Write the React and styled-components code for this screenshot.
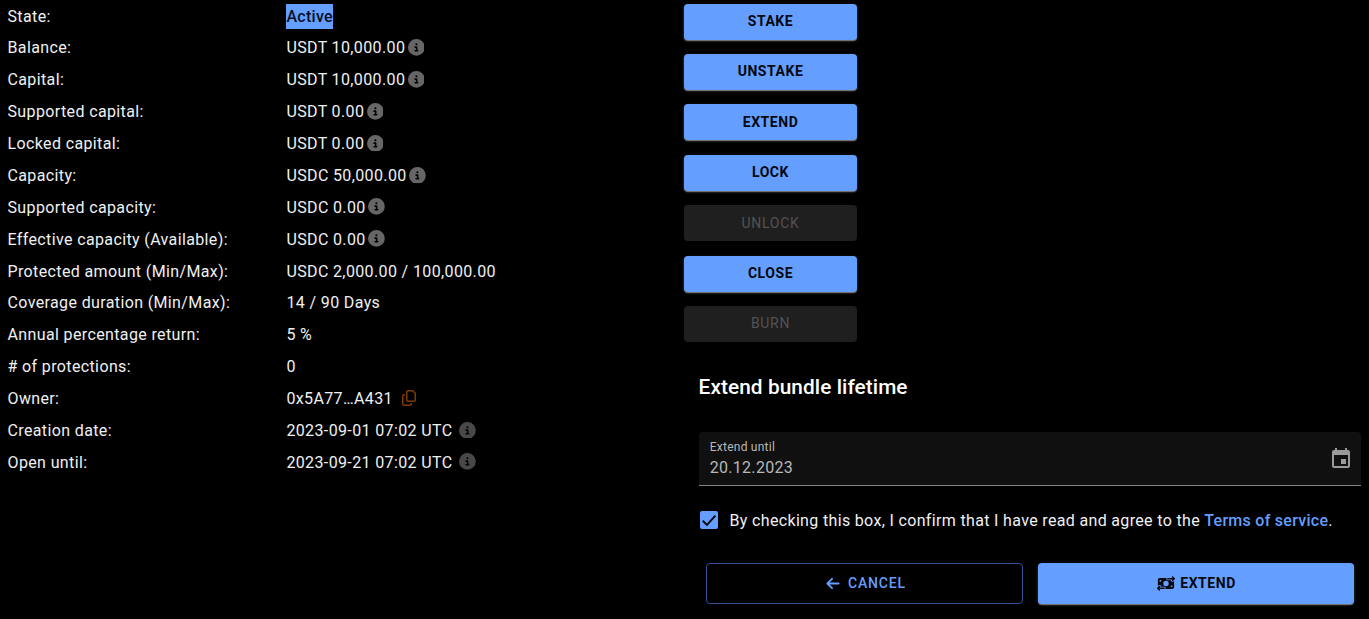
import React from "react";
import styled, { createGlobalStyle } from "styled-components";
import { FaCircleInfo, FaRegCopy, FaArrowLeft, FaMoneyBillTransfer } from "react-icons/fa6";
import { MdEvent } from "react-icons/md";

const GlobalStyle = createGlobalStyle`
  *, *::before, *::after { box-sizing: border-box; }
  body {
    margin: 0;
    background: #000;
    color: #fff;
    font-family: Roboto, "Liberation Sans", sans-serif;
    font-size: 16px;
    line-height: 24px;
    letter-spacing: 0.37px;
    overflow: hidden;
  }
`;

const Page = styled.main`
  display: grid;
  grid-template-columns: 684px 677px;
  height: 619px;
  align-items: start;
`;

const Details = styled.dl`
  display: grid;
  grid-template-columns: 278.9px 1fr;
  grid-auto-rows: 31.88px;
  margin: 0;
  padding: 4.6px 0 0 7.5px;
`;

const Label = styled.dt`
  color: #f0f0f0;
`;

const Value = styled.dd`
  display: flex;
  align-items: flex-start;
  margin: 0;
  color: #f0f0f0;
`;

const Status = styled.span`
  height: 25px;
  margin-top: -0.6px;
  padding-top: 0.6px;
  background: #649eff;
  color: #0a0f1c;
  font-weight: 500;
  letter-spacing: 0.3px;
`;

const InfoIcon = styled(FaCircleInfo)`
  width: 16.8px;
  height: 16.8px;
  margin: 2.6px 0 0 ${(p) => (p.$spaced ? "6.4px" : "2.3px")};
  color: ${(p) => (p.$spaced ? "#484848" : "#666")};
`;

const CopyIcon = styled(FaRegCopy)`
  width: 16px;
  height: 16px;
  margin: 3.2px 0 0 8.1px;
  color: #7a3c00;
`;

const Side = styled.section`
  padding-top: 3.6px;
`;

const Actions = styled.div`
  display: flex;
  flex-direction: column;
  gap: 14.4px;
  width: 173px;
`;

const Button = styled.button`
  display: flex;
  align-items: center;
  justify-content: center;
  height: 36px;
  padding: 0 16px 1px;
  border: 0;
  border-radius: 4px;
  background: #649eff;
  color: #05080f;
  font: 700 14px/24px Roboto, sans-serif;
  letter-spacing: 0.55px;
  text-transform: uppercase;
  box-shadow: 0 1px 1px rgba(255, 255, 255, 0.4), 0 1px 3px rgba(255, 255, 255, 0.2);

  &:disabled {
    background: #1f1f1f;
    color: #525252;
    font-weight: 400;
    letter-spacing: 0.7px;
    box-shadow: none;
  }
`;

const Form = styled.form`
  padding: 29.4px 0 0 15px;
`;

const Title = styled.h2`
  margin: 0 0 0 -0.4px;
  font-size: 20.8px;
  font-weight: 500;
  line-height: 32px;
  letter-spacing: 0.08px;
`;

const DateField = styled.div`
  display: flex;
  align-items: center;
  justify-content: space-between;
  height: 54px;
  margin-top: 29px;
  padding: 0 8px 0 10.7px;
  border-bottom: 1px solid #858585;
  border-radius: 4px 4px 0 0;
  background: #101010;
`;

const FieldText = styled.div`
  display: flex;
  flex-direction: column;
  padding-top: 2px;
`;

const FieldLabel = styled.label`
  color: #b8b8b8;
  font-size: 12px;
  line-height: 17px;
  letter-spacing: 0.25px;
`;

const FieldValue = styled.span`
  color: #b8b8b8;
  line-height: 24px;
  letter-spacing: 0.3px;
`;

const CalendarIcon = styled(MdEvent)`
  width: 24px;
  height: 24px;
  color: #9a9a9a;
`;

const Consent = styled.label`
  display: flex;
  align-items: center;
  height: 24px;
  margin-top: 22.6px;
  padding-left: 1px;
  color: #f0f0f0;
  letter-spacing: 0.34px;
`;

const CheckBox = styled.span`
  display: grid;
  place-items: center;
  width: 18px;
  height: 18px;
  margin: 0 11.5px 1.2px 0;
  border-radius: 2px;
  background: #649eff;
`;

const Link = styled.a`
  color: #649eff;
  font-weight: 500;
  letter-spacing: 0.27px;
`;

const FormActions = styled.div`
  display: flex;
  gap: 15px;
  padding: 30.4px 7px 0;

  ${Button} {
    flex: 1;
    height: 41px;
    padding-left: 17px;
    padding-right: 15.5px;
  }
`;

const OutlineButton = styled(Button)`
  border: 1px solid #324f99;
  background: transparent;
  color: #649eff;
  font-weight: 500;
  letter-spacing: 0.85px;
  box-shadow: none;

  ${FormActions} & {
    padding: 0 13.25px 1px 17.25px;
  }
`;

const BackIcon = styled(FaArrowLeft)`
  width: 14px;
  height: 15px;
  margin-right: 7.5px;
`;

const TransferIcon = styled(FaMoneyBillTransfer)`
  width: 18px;
  height: 15px;
  margin-right: 5px;
`;

const rows = [
  { label: "State:", value: "Active", status: true },
  { label: "Balance:", value: "USDT 10,000.00", info: true },
  { label: "Capital:", value: "USDT 10,000.00", info: true },
  { label: "Supported capital:", value: "USDT 0.00", info: true },
  { label: "Locked capital:", value: "USDT 0.00", info: true },
  { label: "Capacity:", value: "USDC 50,000.00", info: true },
  { label: "Supported capacity:", value: "USDC 0.00", info: true },
  { label: "Effective capacity (Available):", value: "USDC 0.00", info: true },
  { label: "Protected amount (Min/Max):", value: "USDC 2,000.00 / 100,000.00" },
  { label: "Coverage duration (Min/Max):", value: "14 / 90 Days" },
  { label: "Annual percentage return:", value: "5 %" },
  { label: "# of protections:", value: "0" },
  { label: "Owner:", value: "0x5A77…A431", copy: true },
  { label: "Creation date:", value: "2023-09-01 07:02 UTC", info: true, spaced: true },
  { label: "Open until:", value: "2023-09-21 07:02 UTC", info: true, spaced: true },
];

const actions = [
  ["Stake"],
  ["Unstake"],
  ["Extend"],
  ["Lock"],
  ["Unlock", true],
  ["Close"],
  ["Burn", true],
];

export default function App() {
  return (
    <>
      <GlobalStyle />
      <Page>
        <Details>
          {rows.map((row) => (
            <React.Fragment key={row.label}>
              <Label>{row.label}</Label>
              <Value>
                {row.status ? <Status>{row.value}</Status> : <span>{row.value}</span>}
                {row.info && <InfoIcon $spaced={row.spaced} />}
                {row.copy && <CopyIcon />}
              </Value>
            </React.Fragment>
          ))}
        </Details>
        <Side>
          <Actions>
            {actions.map(([name, disabled]) => (
              <Button key={name} type="button" disabled={disabled}>
                {name}
              </Button>
            ))}
          </Actions>
          <Form>
            <Title>Extend bundle lifetime</Title>
            <DateField>
              <FieldText>
                <FieldLabel>Extend until</FieldLabel>
                <FieldValue>20.12.2023</FieldValue>
              </FieldText>
              <CalendarIcon />
            </DateField>
            <Consent>
              <CheckBox>
                <svg width="18" height="18" viewBox="0 0 18 18" fill="none">
                  <path d="M2.7 9.7 7 13.9 15.4 4.6" stroke="#05080f" strokeWidth="2" />
                </svg>
              </CheckBox>
              <span>
                By checking this box, I confirm that I have read and agree to the <Link>Terms of service</Link>.
              </span>
            </Consent>
            <FormActions>
              <OutlineButton type="button">
                <BackIcon />
                Cancel
              </OutlineButton>
              <Button type="button">
                <TransferIcon />
                Extend
              </Button>
            </FormActions>
          </Form>
        </Side>
      </Page>
    </>
  );
}
